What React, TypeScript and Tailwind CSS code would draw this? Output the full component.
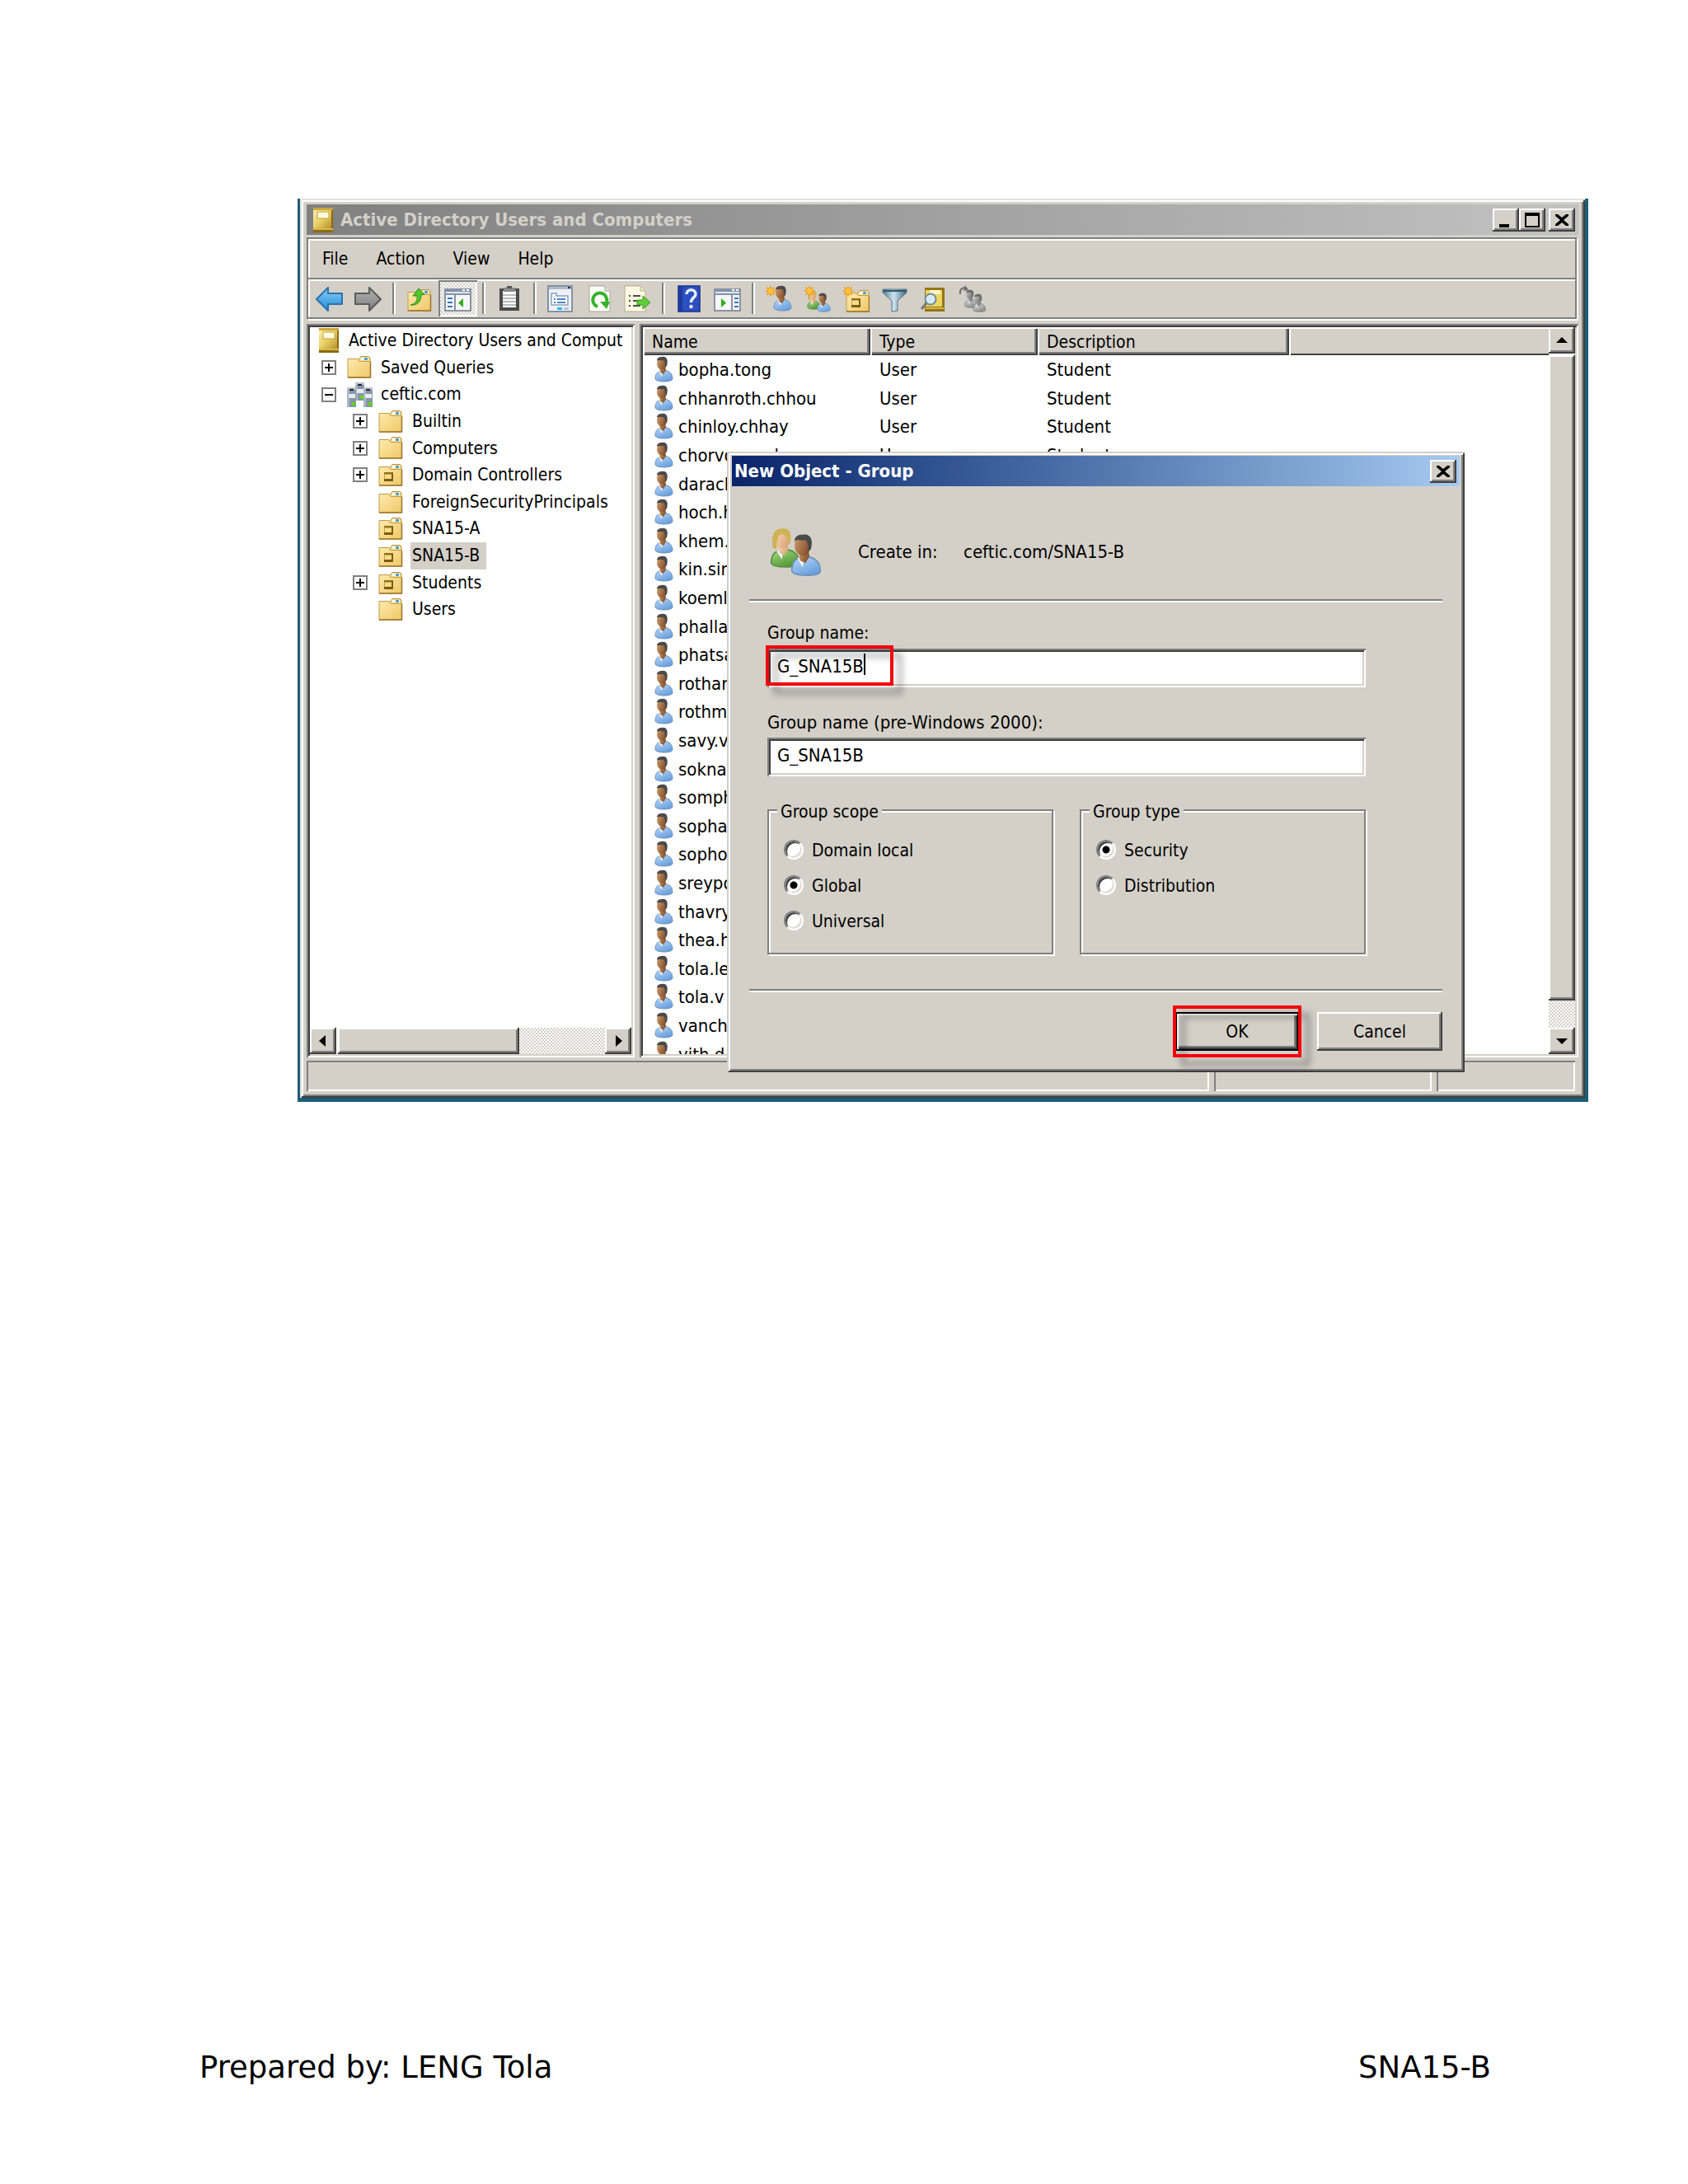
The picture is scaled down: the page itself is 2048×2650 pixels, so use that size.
import { useId, type ReactNode } from "react";

const FACE = "bg-[#d4d0c8]";
const RAISED =
  "bg-[#d4d0c8] shadow-[inset_-2px_-2px_#404040,inset_2px_2px_#fff,inset_-4px_-4px_#808080]";
const SUNKEN =
  "shadow-[inset_2px_2px_#808080,inset_-2px_-2px_#fff,inset_4px_4px_#404040,inset_-4px_-4px_#d4d0c8]";
const DITHER = "bg-[repeating-conic-gradient(#d4d0c8_0_25%,#fff_0_50%)] bg-[length:4px_4px]";

/* ---------- icons ---------- */

function Svg({ w, h, children }: { w: number; h: number; children: ReactNode }) {
  return (
    <svg width={w} height={h} viewBox={`0 0 ${w} ${h}`} className="block shrink-0" aria-hidden="true">
      {children}
    </svg>
  );
}

function BookIcon() {
  const id = useId();
  return (
    <Svg w={26} h={32}>
      <defs>
        <linearGradient id={id} x1="0" y1="0" x2="1" y2="1">
          <stop offset="0" stopColor="#fbeeb0" />
          <stop offset="0.5" stopColor="#e8cf66" />
          <stop offset="1" stopColor="#b8912a" />
        </linearGradient>
      </defs>
      <rect x="1" y="1" width="24" height="30" fill="#8a6a12" />
      <rect x="1" y="1" width="24" height="3" fill="#c9a83c" />
      <rect x="1" y="4" width="22" height="22" fill={`url(#${id})`} />
      <rect x="1" y="26" width="24" height="2" fill="#d9b94a" />
      <rect x="6" y="6" width="14" height="8" fill="#fffbe0" stroke="#c5a23a" />
    </Svg>
  );
}

function FolderShape({ unit }: { unit?: boolean }) {
  const id = useId();
  return (
    <>
      <defs>
        <linearGradient id={id} x1="0" y1="0" x2="1" y2="1">
          <stop offset="0" stopColor="#fdebae" />
          <stop offset="1" stopColor="#f0c766" />
        </linearGradient>
      </defs>
      <path d="M13 7 L17 1.5 H26 L28 3 V10 H13 Z" fill="#f6dd8f" stroke="#b8923c" />
      <rect x="17" y="3" width="9" height="3" fill="#fff" />
      <rect x="21" y="3" width="4" height="3" fill="#4f9fd8" />
      <path d="M1 4.5 H13 L15 7.5 H28.500 V27 H1 Z" fill={`url(#${id})`} stroke="#c39c48" />
      <path d="M1 27 H28.500 V8" fill="none" stroke="#9a7428" strokeWidth="1.500" />
      {unit && (
        <>
          <rect x="7" y="11" width="11" height="11" fill="#c9a640" />
          <rect x="7" y="11" width="11" height="2" fill="#8f7020" />
          <rect x="8" y="14" width="8" height="5" fill="#f5dc8a" />
          <path d="M16 12 h2 v10 h-11 v-3 h9 z" fill="#7a5c16" />
        </>
      )}
    </>
  );
}

function FolderIcon({ unit }: { unit?: boolean }) {
  return (
    <Svg w={30} h={29}>
      <FolderShape unit={unit} />
    </Svg>
  );
}

function ServersIcon() {
  const tower = (x: number, y: number, h: number) => (
    <g key={x}>
      <rect x={x} y={y} width="11" height={h} fill="#8796a5" />
      <rect x={x} y={y} width="3" height={h} fill="#aab7c2" />
      <rect x={x} y={y} width="11" height="3" fill="#b9c2ca" />
      <rect x={x + 3} y={y + 2} width="5" height="2" fill="#1d2a38" />
      <rect x={x + 2} y={y + 8} width="8" height="5" fill="#e6ecf0" />
      <rect x={x + 6} y={y + h - 6} width="4" height="4" fill="#5fd60f" />
    </g>
  );
  return (
    <Svg w={31} h={32}>
      {tower(10, 1, 22)}
      {tower(0, 7, 24)}
      {tower(20, 7, 24)}
    </Svg>
  );
}

function Person({ gray, green }: { gray?: boolean; green?: boolean }) {
  const id = useId();
  const body = gray ? ["#d8d8d8", "#8c8c8c"] : green ? ["#a9dc84", "#4f9636"] : ["#b8d8fa", "#6a9fdc"];
  const skin = gray ? ["#c8c8c8", "#777"] : green ? ["#fbe0c4", "#dca478"] : ["#d2a070", "#83502b"];
  return (
    <>
      <defs>
        <linearGradient id={`${id}b`} x1="0" y1="0" x2="0.6" y2="1">
          <stop offset="0" stopColor={body[0]} />
          <stop offset="1" stopColor={body[1]} />
        </linearGradient>
        <linearGradient id={`${id}s`} x1="0" y1="0" x2="1" y2="0.5">
          <stop offset="0" stopColor={skin[0]} />
          <stop offset="1" stopColor={skin[1]} />
        </linearGradient>
      </defs>
      <path d="M1 28 C1 21 4 18 9 18 L14 17.500 C20 19 22 23 22 28 C21 32 3 32 1 28 Z" fill={`url(#${id}b)`} stroke={gray ? "#777" : green ? "#5c8f45" : "#6d93bd"} />
      <path d="M5 18 L9 25 L10 18 Z" fill="#f4f8fc" />
      <path d="M6 13 L7 20 L11 22 L14 17 L13 11 Z" fill={`url(#${id}s)`} />
      <ellipse cx="9" cy="9" rx="6" ry="7.500" fill={`url(#${id}s)`} />
      <path
        d={green ? "M2 16 C1 6 3 1 9 1 C15 0 17 5 15 14 C14 9 12 6 9 5 C6 6 5 11 5 17 Z" : "M3 6 C3 2 6 1 9 1 C15 0 17 5 15 12 L13 13 C13 9 13 7 11 5 C8 6 5 4 3 6 Z"}
        fill={gray ? "#6b6b6b" : green ? "#cdb355" : "#4a4a4a"}
      />
    </>
  );
}

function UserIcon() {
  return (
    <Svg w={23} h={32}>
      <Person />
    </Svg>
  );
}

function GroupIcon() {
  return (
    <Svg w={64} h={62}>
      <g transform="translate(1 1) scale(1.62 1.55)">
        <Person green />
      </g>
      <g transform="translate(26 8) scale(1.65 1.65)">
        <Person />
      </g>
    </Svg>
  );
}

const Spark = () => (
  <>
    <path
      d="M7 0 L8.500 4 L12 1.500 L10.500 5.500 L14.500 7 L10.500 8.500 L12 12.500 L8.500 10.500 L7 14.500 L5.500 10.500 L1.500 12.500 L3.500 8.500 L0 7 L3.500 5.500 L1.500 1.500 L5.500 4 Z"
      fill="#f59a16"
    />
    <circle cx="7" cy="7" r="3.500" fill="#ffc23c" />
  </>
);

const WindowFrame = () => (
  <>
    <rect x="1" y="5" width="31" height="26" fill="#f6f7f9" stroke="#8b94a0" strokeWidth="2" />
    <rect x="1" y="4" width="31" height="8" fill="#8393a9" />
    <rect x="2" y="8" width="29" height="2" fill="#dfe6ee" />
    <rect x="22" y="5" width="3" height="2" fill="#fff" />
    <rect x="27" y="5" width="3" height="2" fill="#fff" />
  </>
);

function ToolIcon({ name }: { name: string }) {
  const id = useId();
  const arrow = (a: string, b: string, line: string) => (
    <>
      <defs>
        <linearGradient id={id} x1="0" y1="0" x2="0" y2="1">
          <stop offset="0" stopColor={a} />
          <stop offset="1" stopColor={b} />
        </linearGradient>
      </defs>
      <path d="M1 17 L15 3 V10 H32 V23 H15 V31 Z" fill={`url(#${id})`} stroke={line} strokeWidth="2" strokeLinejoin="round" />
    </>
  );
  const art: Record<string, ReactNode> = {
    back: arrow("#8fd0f7", "#1b8ad8", "#2a72ac"),
    forward: <g transform="translate(33 0) scale(-1 1)">{arrow("#b4b4b4", "#7c7c7c", "#5b5b5b")}</g>,
    up: (
      <g transform="translate(2 4)">
        <FolderShape />
        <path d="M4 20 C10 19 13 14 12 9 L7 9 L14 0 L21 7 L17 8 C17 16 12 21 4 20 Z" fill="#55c52c" stroke="#2e8a14" />
      </g>
    ),
    tree: (
      <>
        <WindowFrame />
        <path d="M13 12 V31" stroke="#8b94a0" strokeWidth="2" />
        <path d="M4 16 H10 M4 21 H10 M4 26 H10" stroke="#3974c4" strokeWidth="2" />
        <path d="M23 16 V27 L17 21.500 Z" fill="#31ad18" />
      </>
    ),
    pane: (
      <>
        <WindowFrame />
        <path d="M22 12 V31" stroke="#8b94a0" strokeWidth="2" />
        <path d="M25 16 H30 M25 21 H30 M25 26 H30" stroke="#3974c4" strokeWidth="2" />
        <path d="M9 16 V27 L15 21.500 Z" fill="#31ad18" />
      </>
    ),
    clipboard: (
      <g transform="translate(4 1)">
        <rect x="1" y="3" width="24" height="27" fill="#4a4a4a" />
        <rect x="5" y="6" width="16" height="20" fill="#fafafa" />
        <rect x="6" y="2" width="14" height="5" fill="#8b8b8b" />
        <rect x="10" y="0" width="6" height="3" fill="#555" />
        <path d="M5 11 H21 M5 15 H21 M5 19 H21 M5 23 H21" stroke="#a7a7a7" strokeWidth="1.500" />
      </g>
    ),
    properties: (
      <>
        <rect x="2" y="1" width="29" height="31" fill="#eef2f7" stroke="#8391a5" strokeWidth="2" />
        <rect x="3" y="2" width="27" height="3" fill="#aebbcc" />
        <rect x="26" y="2" width="3" height="2" fill="#24364f" />
        <path d="M6 24 V10 H12 V13 H26 V24 Z" fill="#fff" stroke="#8aa0bd" strokeWidth="1.500" />
        <path d="M9 17 H11 M13 17 H23 M9 21 H11 M13 21 H23" stroke="#4b83c8" strokeWidth="2" />
        <rect x="13" y="27" width="6" height="3" fill="#27b7ec" />
        <rect x="21" y="27" width="6" height="3" fill="#b9c6d6" />
      </>
    ),
    refresh: (
      <g transform="translate(4 0)">
        <path d="M1 1 H20 L26 7 V32 H1 Z" fill="#fcfcf6" stroke="#a6a69a" />
        <path d="M20 1 V7 H26" fill="#e4e4dc" stroke="#a6a69a" />
        <path d="M11 26 A8.500 8.500 0 1 1 22 20" fill="none" stroke="#35b32a" strokeWidth="4" />
        <path d="M14 20 L26 20 L22 29 Z" fill="#35b32a" />
      </g>
    ),
    export: (
      <>
        <path d="M1 1 H20 L26 7 V32 H1 Z" fill="#fdfae4" stroke="#b5ae88" />
        <path d="M20 1 V7 H26" fill="#eee8c8" stroke="#b5ae88" />
        <path d="M6 13 H8 M11 13 H20 M6 19 H8 M11 19 H20 M6 25 H8 M11 25 H20" stroke="#4c4c4c" strokeWidth="2" />
        <path d="M16 18 H23 V13 L32 21 L23 29 V24 H16 Z" fill="#5fce3a" stroke="#3a9a1d" />
      </>
    ),
    help: (
      <g transform="translate(3 0)">
        <rect x="1" y="1" width="26" height="31" fill="#2c50c0" stroke="#1b2f8a" strokeWidth="1.500" />
        <rect x="1" y="1" width="5" height="31" fill="#1e3a9c" />
        <path d="M11 11 C11 4 22 4 22 11 C22 15 16.500 15 16.500 21" fill="none" stroke="#e9eefc" strokeWidth="3.500" />
        <circle cx="16.500" cy="26" r="2.200" fill="#e9eefc" />
      </g>
    ),
    user: (
      <>
        <g transform="translate(10 0)">
          <Person />
        </g>
        <Spark />
      </>
    ),
    users: (
      <>
        <g transform="translate(4 6) scale(0.750)">
          <Person green />
        </g>
        <g transform="translate(16 9) scale(0.750)">
          <Person />
        </g>
        <Spark />
      </>
    ),
    unit: (
      <>
        <g transform="translate(4 5)">
          <FolderShape unit />
        </g>
        <Spark />
      </>
    ),
    filter: (
      <>
        <defs>
          <linearGradient id={id} x1="0" y1="0" x2="1" y2="0">
            <stop offset="0" stopColor="#4d7590" />
            <stop offset="0.450" stopColor="#cfe3ee" />
            <stop offset="1" stopColor="#42677f" />
          </linearGradient>
        </defs>
        <path d="M2 5 H31 V9 L20 19 V31 L13 32 V19 L2 9 Z" fill={`url(#${id})`} stroke="#54788f" />
        <path d="M3 7 H30" stroke="#2f566f" strokeWidth="2" />
      </>
    ),
    find: (
      <>
        <rect x="6" y="3" width="24" height="29" fill="#94751a" />
        <rect x="7" y="6" width="20" height="20" fill="#eed564" />
        <rect x="12" y="6" width="13" height="5" fill="#fff6c2" />
        <rect x="7" y="27" width="22" height="2" fill="#d8ba48" />
        <circle cx="13" cy="17" r="6.500" fill="#d5ebf2" stroke="#6f8d99" strokeWidth="2" />
        <path d="M8 22 L2 29" stroke="#77787a" strokeWidth="3" />
      </>
    ),
    addto: (
      <>
        <g transform="translate(7 5) scale(0.720)">
          <Person gray />
        </g>
        <g transform="translate(17 10) scale(0.720)">
          <Person gray />
        </g>
        <path d="M2 11 C1 4 6 2 10 4" fill="none" stroke="#6f6f6f" strokeWidth="2" />
        <path d="M8 0 L12 6 L6 7 Z" fill="#6f6f6f" />
      </>
    ),
  };
  return <Svg w={33} h={33}>{art[name]}</Svg>;
}

/* ---------- small controls ---------- */

const ARROWS = {
  up: "M7 3 L14 10 H0 Z",
  down: "M7 11 L14 4 H0 Z",
  left: "M2 7 L10 0 V14 Z",
  right: "M12 7 L4 0 V14 Z",
};

function ScrollButton({ dir }: { dir: keyof typeof ARROWS }) {
  return (
    <button type="button" aria-label={`Scroll ${dir}`} className={`flex h-8 w-8 shrink-0 items-center justify-center ${RAISED}`}>
      <Svg w={14} h={14}>
        <path d={ARROWS[dir]} fill="#000" />
      </Svg>
    </button>
  );
}

function CaptionButton({ kind }: { kind: "Minimize" | "Maximize" | "Close" }) {
  return (
    <button type="button" aria-label={kind} className={`flex h-7 w-8 items-center justify-center ${RAISED}`}>
      <Svg w={20} h={18}>
        {kind === "Minimize" && <rect x="2" y="14" width="12" height="4" />}
        {kind === "Maximize" && <path d="M1 0 H19 V18 H1 Z M3 4 V16 H17 V4 Z" fillRule="evenodd" />}
        {kind === "Close" && <path d="M2 2 H5 L10 6 L15 2 H18 V4 L12 9 L18 14 V16 H15 L10 12 L5 16 H2 V14 L8 9 L2 4 Z" />}
      </Svg>
    </button>
  );
}

function Highlight({ className }: { className: string }) {
  return (
    <span
      aria-hidden="true"
      className={`pointer-events-none absolute border-4 border-[#f4000c] drop-shadow-[10px_10px_4px_rgba(0,0,0,0.4)] ${className}`}
    />
  );
}

function Divider() {
  return <hr className="h-1 border-0 border-t-2 border-[#808080] bg-white" />;
}

/* ---------- tree ---------- */

type Node = { label: string; level: number; icon: "book" | "folder" | "unit" | "servers"; toggle?: "+" | "-"; selected?: boolean };

const NODES: Node[] = [
  { label: "Active Directory Users and Comput", level: 0, icon: "book" },
  { label: "Saved Queries", level: 1, icon: "folder", toggle: "+" },
  { label: "ceftic.com", level: 1, icon: "servers", toggle: "-" },
  { label: "Builtin", level: 2, icon: "folder", toggle: "+" },
  { label: "Computers", level: 2, icon: "folder", toggle: "+" },
  { label: "Domain Controllers", level: 2, icon: "unit", toggle: "+" },
  { label: "ForeignSecurityPrincipals", level: 2, icon: "folder" },
  { label: "SNA15-A", level: 2, icon: "unit" },
  { label: "SNA15-B", level: 2, icon: "unit", selected: true },
  { label: "Students", level: 2, icon: "unit", toggle: "+" },
  { label: "Users", level: 2, icon: "folder" },
];

const INDENT = ["pl-2.5", "pl-[13px]", "pl-[51px]"];

function TreeRow({ node }: { node: Node }) {
  return (
    <li className={`flex min-h-0 items-center whitespace-nowrap ${INDENT[node.level]}`}>
      {node.level > 0 && (
        <span className="flex w-8 shrink-0">
          {node.toggle && (
            <button type="button" aria-label={node.toggle === "+" ? `Expand ${node.label}` : `Collapse ${node.label}`} className="block">
              <Svg w={20} h={20}>
                <rect x="2" y="2" width="16" height="16" fill="#fff" stroke="#808080" strokeWidth="2" />
                <path d={node.toggle === "+" ? "M5 10 H15 M10 5 V15" : "M5 10 H15"} stroke="#000" strokeWidth="2" />
              </Svg>
            </button>
          )}
        </span>
      )}
      <span className={`flex shrink-0 ${node.level === 0 ? "w-8" : "w-9"}`}>
        {node.icon === "book" && <BookIcon />}
        {node.icon === "servers" && <ServersIcon />}
        {node.icon === "folder" && <FolderIcon />}
        {node.icon === "unit" && <FolderIcon unit />}
      </span>
      <span className={`ml-[3px] self-stretch pr-2 pl-0.5 leading-8 ${node.selected ? "bg-[#d4d0c8]" : ""}`}>{node.label}</span>
    </li>
  );
}

function TreePane() {
  return (
    <nav aria-label="Console tree" className={`flex w-[398px] shrink-0 flex-col bg-white p-1 ${SUNKEN}`}>
      <ul className="grid h-[359px] auto-rows-fr overflow-hidden">
        {NODES.map((n) => (
          <TreeRow key={n.label} node={n} />
        ))}
      </ul>
      <div className="mt-auto flex">
        <ScrollButton dir="left" />
        <div className={`ml-0.5 h-8 w-[220px] ${RAISED}`} />
        <div className={`flex-1 ${DITHER}`} />
        <ScrollButton dir="right" />
      </div>
    </nav>
  );
}

/* ---------- list ---------- */

type Entry = { name: string; type?: string; description?: string };

const USERS: Entry[] = [
  { name: "bopha.tong", type: "User", description: "Student" },
  { name: "chhanroth.chhou", type: "User", description: "Student" },
  { name: "chinloy.chhay", type: "User", description: "Student" },
  { name: "chorvorn.sok", type: "User", description: "Student" },
  ...[
    "darach", "hoch.h", "khem.", "kin.sin", "koemli", "phalla", "phatsa", "rothar", "rothm", "savy.v", "sokna",
    "somph", "sopha", "sopho", "sreypo", "thavry", "thea.h", "tola.le", "tola.v", "vanch", "vith.d",
  ].map((name) => ({ name })),
];

const TH =
  "h-[34px] p-0 pt-0.5 pl-[11px] text-left font-normal shadow-[inset_2px_2px_#fff,inset_-2px_-2px_#404040,inset_-4px_-4px_#808080] bg-[#d4d0c8]";

function ListPane() {
  return (
    <section aria-label="Objects" className={`flex min-w-0 flex-1 bg-white p-1 ${SUNKEN}`}>
      <div className="h-[882px] min-w-0 flex-1 overflow-hidden">
        <table className="h-[899px] w-full table-fixed border-collapse whitespace-nowrap">
          <thead>
            <tr className="h-[34px]">
              <th scope="col" className={`w-[276px] ${TH}`}>Name</th>
              <th scope="col" className={`w-[203px] ${TH}`}>Type</th>
              <th scope="col" className={`w-[305px] ${TH}`}>Description</th>
              <td className="bg-[#d4d0c8] p-0 shadow-[inset_2px_2px_#fff,inset_0_-2px_#404040]" />
            </tr>
          </thead>
          <tbody className="text-[22px]">
            {USERS.map((u) => (
              <tr key={u.name}>
                <td className="overflow-hidden p-0 pl-3.5">
                  <span className="flex items-center gap-1.5">
                    <UserIcon />
                    <span className="pt-0.5 leading-8">{u.name}</span>
                  </span>
                </td>
                <td className="p-0 pt-0.5 pl-[11px] leading-8">{u.type}</td>
                <td className="p-0 pt-0.5 pl-[11px] leading-8">{u.description}</td>
                <td className="p-0" />
              </tr>
            ))}
          </tbody>
        </table>
      </div>
      <div className="flex w-8 shrink-0 flex-col">
        <ScrollButton dir="up" />
        <div className={`mt-0.5 h-[783px] ${RAISED}`} />
        <div className={`flex-1 ${DITHER}`} />
        <ScrollButton dir="down" />
      </div>
    </section>
  );
}

/* ---------- dialog ---------- */

function Radio({ name, label, checked }: { name: string; label: string; checked?: boolean }) {
  return (
    <label className="flex h-[43px] items-center gap-2.5">
      <input
        type="radio"
        name={name}
        defaultChecked={checked}
        className="h-6 w-6 appearance-none rounded-full border-2 border-t-[#808080] border-r-white border-b-white border-l-[#808080] bg-white shadow-[inset_2px_2px_#404040,inset_-2px_-2px_#dedbd4] checked:bg-[radial-gradient(circle,#000_4px,#fff_5px)]"
      />
      <span className="pt-0.5">{label}</span>
    </label>
  );
}

const FIELDSET =
  "h-[189px] min-w-0 border-2 border-[#808080] px-[18px] pt-3 shadow-[2px_2px_#fff,inset_2px_2px_#fff]";
const LEGEND = "-ml-2 h-7 bg-[#d4d0c8] px-1 leading-8";
const FIELD = `h-[47px] w-full bg-white px-3 pb-1 text-[22px] outline-none ${SUNKEN}`;

function NewGroupDialog() {
  return (
    <div
      role="dialog"
      aria-label="New Object - Group"
      className={`absolute top-[307px] right-[150px] left-[521px] px-1.5 pt-[5px] pb-1 ${FACE} shadow-[inset_2px_2px_#d4d0c8,inset_-2px_-2px_#404040,inset_4px_4px_#fff,inset_-4px_-4px_#808080]`}
    >
      <div className="flex h-[37px] items-center justify-between bg-linear-to-r from-[#0a246a] to-[#a6caf0] pr-1 pl-[3px] text-[22px] font-bold text-white">
        <span>New Object - Group</span>
        <CaptionButton kind="Close" />
      </div>
      <form className="px-[21px] pb-[22px]" onSubmit={(e) => e.preventDefault()}>
        <div className="flex h-[137px] items-center pt-[22px] pl-6 text-[22px]">
          <GroupIcon />
          <span className="ml-11 w-32">Create in:</span>
          <span>ceftic.com/SNA15-B</span>
        </div>
        <Divider />
        <div className="pr-[93px] pl-[22px]">
          <label htmlFor="group-name" className="mt-[23px] mb-[5px] block leading-7">Group name:</label>
          <div className="relative">
            <input id="group-name" defaultValue="G_SNA15B" className={FIELD} />
            <span aria-hidden="true" className="absolute top-1.5 left-[117px] h-[26px] w-0.5 bg-black" />
            <Highlight className="-top-1 -left-0.5 h-[49px] w-[155px]" />
          </div>
          <label htmlFor="group-name-legacy" className="mt-[29px] mb-1 block text-[22px] leading-7">
            Group name (pre-Windows 2000):
          </label>
          <input id="group-name-legacy" defaultValue="G_SNA15B" className={FIELD} />
          <div className="mt-[27px] grid grid-cols-2 gap-8">
            <fieldset className={FIELDSET}>
              <legend className={LEGEND}>Group scope</legend>
              <Radio name="scope" label="Domain local" />
              <Radio name="scope" label="Global" checked />
              <Radio name="scope" label="Universal" />
            </fieldset>
            <fieldset className={FIELDSET}>
              <legend className={LEGEND}>Group type</legend>
              <Radio name="type" label="Security" checked />
              <Radio name="type" label="Distribution" />
            </fieldset>
          </div>
        </div>
        <div className="mt-[42px]">
          <Divider />
        </div>
        <div className="mt-6 flex justify-end gap-[22px]">
          <div className="relative">
            <button
              type="submit"
              className="h-[47px] w-[150px] border-2 border-black bg-[#d4d0c8] shadow-[inset_2px_2px_#fff,inset_-2px_-2px_#404040,inset_-4px_-4px_#808080]"
            >
              OK
            </button>
            <Highlight className="-inset-x-[3px] -inset-y-2" />
          </div>
          <button type="button" className={`h-[47px] w-[152px] ${RAISED}`}>Cancel</button>
        </div>
      </form>
    </div>
  );
}

/* ---------- window ---------- */

const TOOLS = [
  "back", "forward", "|", "up", "tree", "|", "clipboard", "|", "properties", "refresh", "export", "|", "help", "pane",
  "|", "user", "users", "unit", "filter", "find", "addto",
];

const CELL = "shadow-[inset_2px_2px_#808080,inset_-2px_-2px_#fff]";

function ConsoleWindow() {
  return (
    <div className="relative bg-[#1c5e78] pr-1 pb-[5px] pl-[3px] font-['DejaVu_Sans_Condensed','DejaVu_Sans',sans-serif] text-[21px] leading-7 text-black">
      <div className={`p-2 pt-[7px] ${FACE} shadow-[inset_2px_2px_#e4e1da,inset_-2px_-2px_#404040,inset_4px_4px_#fff,inset_-4px_-4px_#808080]`}>
        <header className="flex h-[37px] items-center bg-linear-to-r from-[#808080] to-[#c2c2c2] pr-1 pl-[7px] text-[22px] font-bold text-[#d4d0c8]">
          <BookIcon />
          <span className="ml-2">Active Directory Users and Computers</span>
          <div className="ml-auto flex">
            <CaptionButton kind="Minimize" />
            <CaptionButton kind="Maximize" />
            <div className="ml-1 flex">
              <CaptionButton kind="Close" />
            </div>
          </div>
        </header>

        <div className="mt-[3px] mr-0.5 border-2 border-[#808080] shadow-[2px_2px_#fff]">
          <div role="menubar" className="flex h-[47px] items-center gap-[34px] pl-[17px] shadow-[inset_2px_2px_#fff]">
            {["File", "Action", "View", "Help"].map((m) => (
              <button key={m} type="button" role="menuitem">{m}</button>
            ))}
          </div>
          <div role="toolbar" aria-label="Standard" className="flex h-12 items-center border-t-2 border-[#808080] pl-0.5 shadow-[inset_2px_2px_#fff]">
            {TOOLS.map((t, i) =>
              t === "|" ? (
                <span key={i} className="flex w-[15px] justify-center">
                  <span className="h-[38px] w-1 border-l-2 border-[#808080] bg-white" />
                </span>
              ) : (
                <button
                  key={i}
                  type="button"
                  aria-label={t}
                  className={`flex h-11 w-[47px] items-center justify-center ${t === "tree" ? `${DITHER} shadow-[inset_2px_2px_#808080,inset_-2px_-2px_#fff]` : ""}`}
                >
                  <ToolIcon name={t} />
                </button>
              ),
            )}
          </div>
        </div>

        <main className="mt-1.5 flex h-[890px] gap-1.5">
          <TreePane />
          <ListPane />
        </main>

        <footer className="mt-1 mr-1 flex h-[37px] gap-1.5">
          <div className={`flex-1 ${CELL}`} />
          <div className={`w-[264px] ${CELL}`} />
          <div className={`w-[168px] ${CELL}`} />
        </footer>
      </div>
      <NewGroupDialog />
    </div>
  );
}

export default function App() {
  return (
    <div className="flex min-h-screen flex-col bg-white">
      <div className="pt-[241px] pr-[121px] pl-[361px]">
        <ConsoleWindow />
      </div>
      <footer className="mt-auto flex justify-between pr-[239px] pb-[116px] pl-[242px] font-['DejaVu_Sans',sans-serif] text-[37px] leading-[50px] text-black">
        <span>Prepared by: LENG Tola</span>
        <span>SNA15-B</span>
      </footer>
    </div>
  );
}
